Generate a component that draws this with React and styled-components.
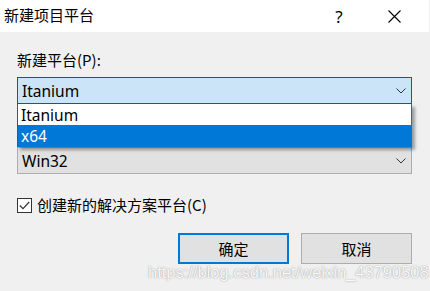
import React from "react";
import styled, { createGlobalStyle } from "styled-components";

const GlobalStyle = createGlobalStyle`
  html, body {
    margin: 0;
    padding: 0;
    background: #f0f0f0;
  }
  body {
    font-family: "Noto Sans", "Noto Sans CJK SC", sans-serif;
    color: #000;
  }
`;

const Dialog = styled.div`
  position: relative;
  width: 430px;
  height: 291px;
  background: #f0f0f0;
  overflow: hidden;
`;

const TitleBar = styled.div`
  display: flex;
  align-items: center;
  height: 32px;
  background: #fff;
  padding-left: 4px;
  margin-right: 1px;
`;

const Title = styled.div`
  flex: 1;
  font-family: "Noto Sans CJK SC", sans-serif;
  font-size: 15px;
  line-height: 20px;
  margin-top: -2px;
`;

const TitleButton = styled.div`
  display: flex;
  align-items: center;
  justify-content: center;
  width: ${(p) => p.$w}px;
  height: 32px;
  font-family: "Noto Sans", sans-serif;
  font-size: 17px;
`;

const Body = styled.div`
  padding: 18px 18px 0 17px;
  display: flex;
  flex-direction: column;
`;

const Label = styled.div`
  font-family: "Noto Sans CJK SC", sans-serif;
  font-size: 15px;
  line-height: 20px;
  height: 20px;
`;

const ComboArea = styled.div`
  position: relative;
  margin-top: 7px;
`;

const Combo = styled.div`
  box-sizing: border-box;
  display: flex;
  align-items: center;
  height: 27px;
  padding: 0 5px 0 4px;
  border: 1px solid ${(p) => (p.$active ? "#0a5aa6" : "#adadad")};
  background: ${(p) => (p.$active ? "#cce4f7" : "#e1e1e1")};
  margin-top: ${(p) => p.$gap || 0}px;
`;

const ComboText = styled.span`
  flex: 1;
  font-family: "Noto Sans", sans-serif;
  font-size: 15.5px;
  line-height: 20px;
`;

const DropList = styled.div`
  position: absolute;
  left: 0;
  right: 0;
  top: 27px;
  border-left: 1px solid #1c5e9e;
  border-right: 1px solid #0078d7;
  background: #fff;
  box-shadow: 3px 3px 3px rgba(0, 0, 0, 0.35);
  z-index: 2;
`;

const DropItem = styled.div`
  height: ${(p) => p.$h}px;
  display: flex;
  align-items: center;
  padding-left: 3px;
  font-family: "Noto Sans", sans-serif;
  font-size: 15.5px;
  background: ${(p) => (p.$selected ? "#0078d7" : "#fff")};
  color: ${(p) => (p.$selected ? "#fff" : "#000")};
`;

const CheckRow = styled.label`
  display: flex;
  align-items: center;
  margin-top: 21px;
  height: 20px;
`;

const CheckBox = styled.span`
  box-sizing: border-box;
  width: 15px;
  height: 15px;
  border: 1px solid #333;
  background: #fff;
  display: flex;
  align-items: center;
  justify-content: center;
  margin-right: 5px;
`;

const CheckLabel = styled.span`
  font-family: "Noto Sans CJK SC", sans-serif;
  font-size: 15px;
  line-height: 20px;
`;

const Buttons = styled.div`
  display: flex;
  justify-content: flex-end;
  gap: 12px;
  margin-top: 18px;
`;

const Button = styled.button`
  box-sizing: border-box;
  width: 111px;
  height: 31px;
  background: #e1e1e1;
  border: ${(p) => (p.$default ? "2px solid #0078d7" : "1px solid #adadad")};
  font-family: "Noto Sans CJK SC", sans-serif;
  font-size: 15px;
  color: #000;
  padding: 0;
`;

const Watermark = styled.div`
  position: absolute;
  left: 148px;
  top: 263px;
  font-family: "Liberation Sans", Arial, sans-serif;
  font-size: 16.5px;
  color: rgba(255, 255, 255, 0.95);
  text-shadow: 0 0 1px rgba(90, 90, 90, 0.55), 0 0 2px rgba(140, 140, 140, 0.35);
  white-space: nowrap;
  pointer-events: none;
  z-index: 3;
`;

const Chevron = () => (
  <svg width="10" height="6" viewBox="0 0 10 6">
    <path d="M0.5 0.5 L5 5 L9.5 0.5" fill="none" stroke="#333" strokeWidth="1" />
  </svg>
);

const CloseIcon = () => (
  <svg width="13" height="13" viewBox="0 0 13 13">
    <path d="M0.5 0.5 L12.5 12.5 M12.5 0.5 L0.5 12.5" stroke="#000" strokeWidth="1.1" />
  </svg>
);

const CheckMark = () => (
  <svg width="11" height="9" viewBox="0 0 11 9">
    <path d="M0.8 4.5 L4 7.6 L10.2 1" fill="none" stroke="#333" strokeWidth="1.2" />
  </svg>
);

export default function App() {
  return (
    <Dialog>
      <GlobalStyle />
      <TitleBar>
        <Title>新建项目平台</Title>
        <TitleButton $w={24}>?</TitleButton>
        <TitleButton $w={30} style={{ marginLeft: 28, marginRight: 20 }}>
          <CloseIcon />
        </TitleButton>
      </TitleBar>
      <Body>
        <Label>新建平台(P):</Label>
        <ComboArea>
          <Combo $active>
            <ComboText>Itanium</ComboText>
            <Chevron />
          </Combo>
          <DropList>
            <DropItem $h={21}>Itanium</DropItem>
            <DropItem $h={22} $selected>x64</DropItem>
          </DropList>
          <Combo $gap={43}>
            <ComboText>Win32</ComboText>
            <Chevron />
          </Combo>
        </ComboArea>
        <CheckRow>
          <CheckBox>
            <CheckMark />
          </CheckBox>
          <CheckLabel>创建新的解决方案平台(C)</CheckLabel>
        </CheckRow>
        <Buttons>
          <Button $default>确定</Button>
          <Button>取消</Button>
        </Buttons>
      </Body>
      <Watermark>https://blog.csdn.net/weixin_43790508</Watermark>
    </Dialog>
  );
}
